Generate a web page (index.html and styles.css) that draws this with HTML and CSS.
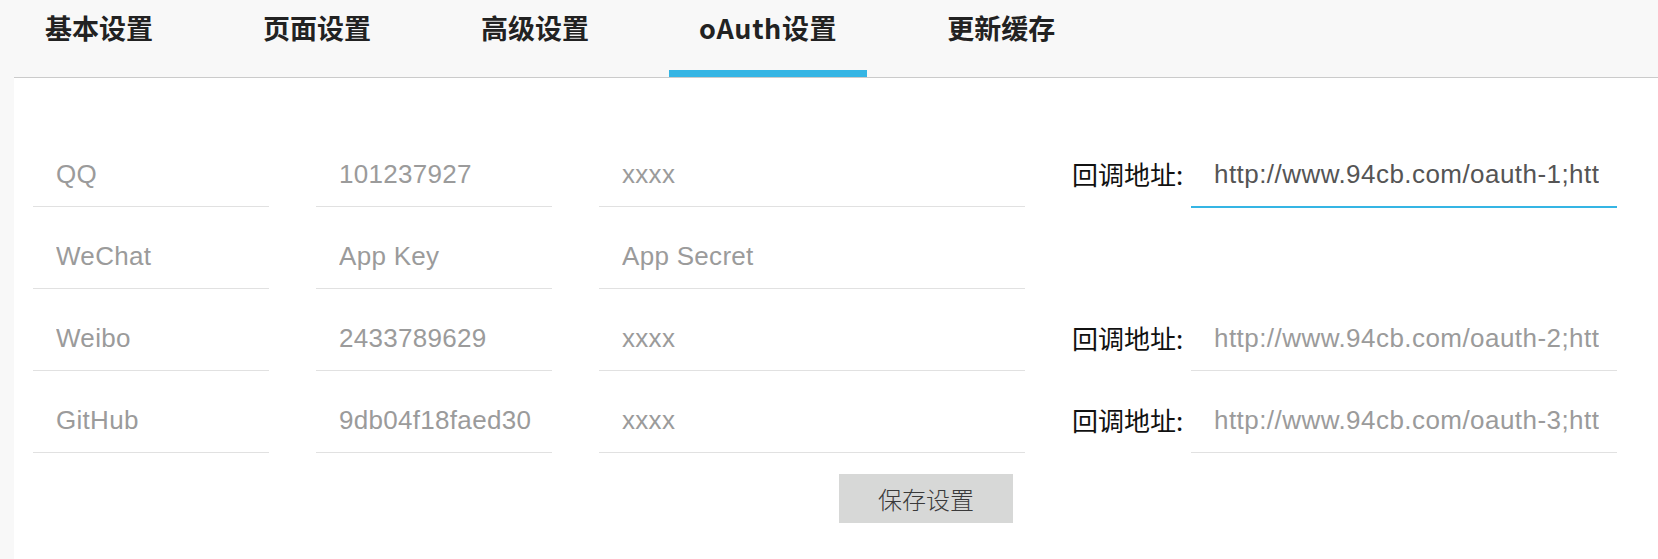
FILE: index.html
```html
<!DOCTYPE html>
<html lang="zh-CN">
<head>
<meta charset="utf-8">
<title>oAuth设置</title>
<link rel="stylesheet" href="styles.css">
</head>
<body>
<div class="page">
  <nav class="tabs">
    <a class="tab">基本设置</a>
    <a class="tab">页面设置</a>
    <a class="tab">高级设置</a>
    <a class="tab tab-active">oAuth设置</a>
    <a class="tab">更新缓存</a>
  </nav>
  <div class="panel">
    <form class="oauth-grid">
      <input class="field field-name" type="text" value="QQ">
      <input class="field" type="text" value="101237927">
      <input class="field" type="text" value="xxxx">
      <div class="callback">
        <span class="callback-label">回调地址:</span>
        <input class="field field-url is-active" type="text" value="http://www.94cb.com/oauth-1;http://www.94cb.com/oauth-1">
      </div>

      <input class="field field-name" type="text" placeholder="WeChat">
      <input class="field" type="text" placeholder="App Key">
      <input class="field" type="text" placeholder="App Secret">

      <input class="field field-name" type="text" value="Weibo">
      <input class="field" type="text" value="2433789629">
      <input class="field" type="text" value="xxxx">
      <div class="callback">
        <span class="callback-label">回调地址:</span>
        <input class="field field-url" type="text" value="http://www.94cb.com/oauth-2;http://www.94cb.com/oauth-2">
      </div>

      <input class="field field-name" type="text" value="GitHub">
      <input class="field" type="text" value="9db04f18faed30">
      <input class="field" type="text" value="xxxx">
      <div class="callback">
        <span class="callback-label">回调地址:</span>
        <input class="field field-url" type="text" value="http://www.94cb.com/oauth-3;http://www.94cb.com/oauth-3">
      </div>

      <button class="save-btn" type="button">保存设置</button>
    </form>
  </div>
</div>
</body>
</html>
```

FILE: styles.css
```css
html, body {
  margin: 0;
  padding: 0;
  background: #f8f8f8;
}

.page {
  margin-left: 14px;
}

.tabs {
  display: flex;
  gap: 50px;
  padding-left: 1px;
  border-bottom: 1px solid #cbcbcb;
}

.tab {
  display: block;
  height: 70px;
  padding: 0 30px;
  line-height: 56px;
  border-bottom: 7px solid transparent;
  font-family: "Noto Sans CJK SC", "Liberation Sans", sans-serif;
  font-weight: 700;
  font-size: 27px;
  color: #222;
  white-space: nowrap;
}

.tab-active {
  border-bottom-color: #35b5e4;
  letter-spacing: 0.6px;
}

.panel {
  background: #fff;
  min-height: calc(100vh - 78px);
  padding: 64px 0 0 19px;
  box-sizing: border-box;
}

.oauth-grid {
  display: grid;
  grid-template-columns: 236px 236px 426px 545px;
  column-gap: 47px;
  row-gap: 17px;
  margin: 0;
}

.field {
  display: block;
  width: 100%;
  height: 65px;
  box-sizing: border-box;
  margin: 0;
  padding: 0 14px 0 23px;
  border: none;
  border-bottom: 1px solid #e1e1e1;
  outline: none;
  background: transparent;
  font-family: "Liberation Sans", Arial, sans-serif;
  font-size: 26px;
  letter-spacing: 0.3px;
  color: #9b9b9b;
}

.field::placeholder {
  color: #9b9b9b;
  opacity: 1;
}

.field-name {
  grid-column: 1;
}

.field.is-active {
  color: #555;
  border-bottom-color: #35b5e4;
  box-shadow: 0 1px 0 #35b5e4;
}

.callback {
  display: flex;
  align-items: center;
}

.callback-label {
  flex: 0 0 119px;
  font-family: "Noto Sans CJK SC", "Liberation Sans", sans-serif;
  font-size: 26px;
  color: #111;
  white-space: nowrap;
  padding-bottom: 2px;
}

.field-url {
  flex: 1 1 auto;
  width: auto;
  min-width: 0;
  padding-right: 18px;
  letter-spacing: 0.45px;
}

.save-btn {
  grid-column: 3;
  justify-self: end;
  margin: 4px 12px 0 0;
  width: 174px;
  height: 49px;
  border: none;
  background: #d7d8d7;
  font-family: "Noto Sans CJK SC", sans-serif;
  font-weight: 300;
  font-size: 24px;
  color: #3a3a3a;
  padding: 0;
}
```
